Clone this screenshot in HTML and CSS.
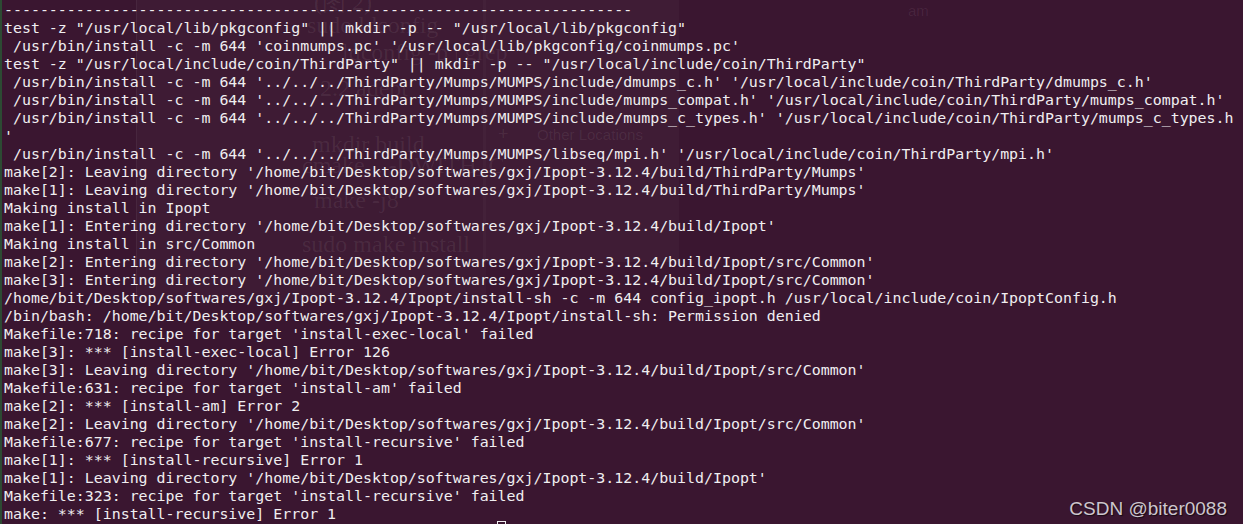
FILE: index.html
```html
<!DOCTYPE html>
<html>
<head>
<meta charset="utf-8">
<link rel="stylesheet" href="styles.css">
</head>
<body>
<div class="screen">
  <div class="ghost">
    <div class="ghost-doc"></div>
    <div class="ghost-panel"></div>
    <div class="gt g1">(图 2)</div>
    <div class="gt g2">sudo ldconfig</div>
    <div class="gt g3">ldconfig -p | grep</div>
    <div class="gt g4">2.2 adept</div>
    <div class="gt g5">mkdir build</div>
    <div class="gt g6">cmake .. -DWITH_C</div>
    <div class="gt g7">make -j8</div>
    <div class="gt g8">sudo make install</div>
    <div class="gs g9">+</div>
    <div class="gs g10">Other Locations</div>
    <div class="gs g11">am</div>
  </div>
  <div class="term">
<div class="ln">----------------------------------------------------------------------</div>
<div class="ln">test -z "/usr/local/lib/pkgconfig" || mkdir -p -- "/usr/local/lib/pkgconfig"</div>
<div class="ln"> /usr/bin/install -c -m 644 'coinmumps.pc' '/usr/local/lib/pkgconfig/coinmumps.pc'</div>
<div class="ln">test -z "/usr/local/include/coin/ThirdParty" || mkdir -p -- "/usr/local/include/coin/ThirdParty"</div>
<div class="ln"> /usr/bin/install -c -m 644 '../../../ThirdParty/Mumps/MUMPS/include/dmumps_c.h' '/usr/local/include/coin/ThirdParty/dmumps_c.h'</div>
<div class="ln"> /usr/bin/install -c -m 644 '../../../ThirdParty/Mumps/MUMPS/include/mumps_compat.h' '/usr/local/include/coin/ThirdParty/mumps_compat.h'</div>
<div class="ln"> /usr/bin/install -c -m 644 '../../../ThirdParty/Mumps/MUMPS/include/mumps_c_types.h' '/usr/local/include/coin/ThirdParty/mumps_c_types.h</div>
<div class="ln">'</div>
<div class="ln"> /usr/bin/install -c -m 644 '../../../ThirdParty/Mumps/MUMPS/libseq/mpi.h' '/usr/local/include/coin/ThirdParty/mpi.h'</div>
<div class="ln">make[2]: Leaving directory '/home/bit/Desktop/softwares/gxj/Ipopt-3.12.4/build/ThirdParty/Mumps'</div>
<div class="ln">make[1]: Leaving directory '/home/bit/Desktop/softwares/gxj/Ipopt-3.12.4/build/ThirdParty/Mumps'</div>
<div class="ln">Making install in Ipopt</div>
<div class="ln">make[1]: Entering directory '/home/bit/Desktop/softwares/gxj/Ipopt-3.12.4/build/Ipopt'</div>
<div class="ln">Making install in src/Common</div>
<div class="ln">make[2]: Entering directory '/home/bit/Desktop/softwares/gxj/Ipopt-3.12.4/build/Ipopt/src/Common'</div>
<div class="ln">make[3]: Entering directory '/home/bit/Desktop/softwares/gxj/Ipopt-3.12.4/build/Ipopt/src/Common'</div>
<div class="ln">/home/bit/Desktop/softwares/gxj/Ipopt-3.12.4/Ipopt/install-sh -c -m 644 config_ipopt.h /usr/local/include/coin/IpoptConfig.h</div>
<div class="ln">/bin/bash: /home/bit/Desktop/softwares/gxj/Ipopt-3.12.4/Ipopt/install-sh: Permission denied</div>
<div class="ln">Makefile:718: recipe for target 'install-exec-local' failed</div>
<div class="ln">make[3]: *** [install-exec-local] Error 126</div>
<div class="ln">make[3]: Leaving directory '/home/bit/Desktop/softwares/gxj/Ipopt-3.12.4/build/Ipopt/src/Common'</div>
<div class="ln">Makefile:631: recipe for target 'install-am' failed</div>
<div class="ln">make[2]: *** [install-am] Error 2</div>
<div class="ln">make[2]: Leaving directory '/home/bit/Desktop/softwares/gxj/Ipopt-3.12.4/build/Ipopt/src/Common'</div>
<div class="ln">Makefile:677: recipe for target 'install-recursive' failed</div>
<div class="ln">make[1]: *** [install-recursive] Error 1</div>
<div class="ln">make[1]: Leaving directory '/home/bit/Desktop/softwares/gxj/Ipopt-3.12.4/build/Ipopt'</div>
<div class="ln">Makefile:323: recipe for target 'install-recursive' failed</div>
<div class="ln">make: *** [install-recursive] Error 1</div>
  </div>
  <div class="cursor"></div>
  <div class="watermark">CSDN @biter0088</div>
</div>
</body>
</html>
```
FILE: styles.css
```css
html, body {
  margin: 0;
  padding: 0;
  background: #3a1630;
  overflow: hidden;
}
.screen {
  position: relative;
  width: 1243px;
  height: 524px;
  background: #3a1630;
  border-left: 2px solid #2c4a33;
  box-sizing: border-box;
  overflow: hidden;
}
.term {
  position: relative;
  z-index: 2;
  padding: 1px 0 0 2px;
  font-family: "DejaVu Sans Mono", "Liberation Mono", monospace;
  font-size: 14.92px;
  line-height: 18px;
  color: #f0eef0;
}
.ln {
  white-space: pre;
  height: 18px;
}
.ghost {
  position: absolute;
  inset: 0;
  z-index: 1;
  pointer-events: none;
}
.ghost-doc {
  position: absolute;
  left: 134px;
  top: 0;
  width: 349px;
  height: 300px;
  background: rgba(255, 255, 255, 0.022);
  border-left: 1px solid rgba(255, 255, 255, 0.05);
}
.ghost-panel {
  position: absolute;
  left: 481px;
  top: 0;
  width: 196px;
  height: 262px;
  background: rgba(255, 255, 255, 0.028);
}
.gt {
  position: absolute;
  font-family: "Liberation Serif", serif;
  font-size: 24px;
  line-height: 24px;
  color: rgba(255, 255, 255, 0.07);
  white-space: pre;
}
.gs {
  position: absolute;
  font-family: "Liberation Sans", sans-serif;
  font-size: 15px;
  line-height: 16px;
  color: rgba(255, 255, 255, 0.07);
  white-space: pre;
}
.g1 { left: 312px; top: -10px; }
.g2 { left: 305px; top: 13px; }
.g3 { left: 340px; top: 40px; }
.g4 { left: 318px; top: 76px; }
.g5 { left: 310px; top: 132px; }
.g6 { left: 300px; top: 153px; }
.g7 { left: 312px; top: 188px; }
.g8 { left: 300px; top: 232px; }
.g9 { left: 496px; top: 126px; font-size: 18px; }
.g10 { left: 535px; top: 127px; }
.g11 { left: 906px; top: 3px; }
.cursor {
  position: absolute;
  z-index: 3;
  left: 495px;
  top: 521px;
  width: 9px;
  height: 12px;
  border: 1px solid #f0eef0;
  box-sizing: border-box;
}
.watermark {
  position: absolute;
  z-index: 3;
  right: 16px;
  bottom: 4px;
  font-family: "Liberation Sans", sans-serif;
  font-size: 19px;
  line-height: 22px;
  color: #cdc6cd;
  text-shadow: 1px 1px 1px rgba(0, 0, 0, 0.6);
}
```
